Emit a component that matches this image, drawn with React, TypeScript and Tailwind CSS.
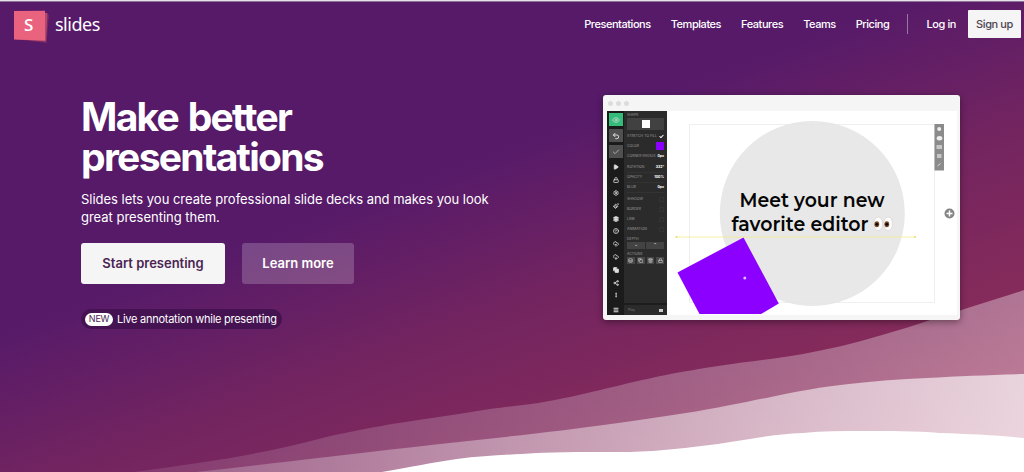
import React from "react";
import {
  Check,
  CircleHelp,
  CloudDownload,
  CloudUpload,
  Copy,
  Eye,
  Layers,
  Lock,
  Menu,
  MoreVertical,
  Paintbrush,
  Play,
  Settings,
  Share2,
  Trash2,
  Undo2,
} from "lucide-react";

const navLinks = ["Presentations", "Templates", "Features", "Teams", "Pricing"];

const railIcons = [
  { Icon: Play, solid: true },
  { Icon: Lock, solid: false },
  { Icon: Settings, solid: false },
  { Icon: Paintbrush, solid: false },
  { Icon: Layers, solid: true },
  { Icon: CircleHelp, solid: false },
  { Icon: CloudUpload, solid: false },
  { Icon: CloudDownload, solid: false },
  { Icon: Copy, solid: true },
  { Icon: Share2, solid: false },
  { Icon: MoreVertical, solid: true },
];

const values = [
  { label: "ROTATION", value: "332°" },
  { label: "OPACITY", value: "100%" },
  { label: "BLUR", value: "0px" },
];

const toggles = ["SHADOW", "BORDER", "LINK", "ANIMATION"];

const Logo: React.FC = () => (
  <a className="flex items-center">
    <svg width="37" height="34" viewBox="0 0 37 34">
      <path d="M3 1 36 4.500 33.500 33 1 29Z" fill="#7d2862" />
      <path d="M2 1 34.500 3 33 31.500 1 29Z" fill="#b04870" />
      <path d="M1 1 32 .8 32 30.500 1 29.500Z" fill="#e9637f" />
      <text x="15.800" y="21" textAnchor="middle" fill="#fff" fontSize="17" fontWeight="600" fontFamily="Open Sans, sans-serif">
        S
      </text>
    </svg>
    <span className="-mt-[7px] ml-[5px] font-['Noto_Sans','Open_Sans',sans-serif] text-[18px] leading-6 tracking-[-0.500px] text-white">
      slides
    </span>
  </a>
);

const Header: React.FC = () => (
  <header className="flex h-[38px] items-start justify-between pl-[13px] pr-[3px] pt-[8px]">
    <Logo />
    <nav className="flex h-[28px] items-center text-[11px] font-medium tracking-[-0.400px] text-white">
      <div className="flex gap-5 tracking-[-0.450px]">
        {navLinks.map((link) => (
          <a key={link}>{link}</a>
        ))}
      </div>
      <span className="ml-[18px] h-5 w-px bg-white/40" />
      <a className="ml-[18px]">Log in</a>
      <a className="ml-[12px] flex h-[28px] w-[53px] items-center justify-center rounded-[1px] bg-[#f5f5f5] text-[#4c4450]">Sign up</a>
    </nav>
  </header>
);

const Rail: React.FC = () => (
  <div className="flex h-full w-[17px] flex-col items-center bg-[#1b1b1b] pt-[2px] text-[#ddd]">
    <div className="flex h-[13px] w-[14px] items-center justify-center bg-[#35bb7a]">
      <Eye size={8} />
    </div>
    <div className="mt-[3px] flex h-[13px] w-[14px] items-center justify-center bg-[#505050]">
      <Undo2 size={8} strokeWidth={3} />
    </div>
    <div className="mt-[3px] flex h-[13px] w-[14px] items-center justify-center bg-[#505050] text-[#aaa]">
      <Check size={8} strokeWidth={3} />
    </div>
    <div className="mt-[3px] flex flex-col">
      {railIcons.map(({ Icon, solid }, i) => (
        <span key={i} className="flex h-[12.800px] items-center">
          <Icon size={6} strokeWidth={3} fill={solid ? "currentColor" : "none"} />
        </span>
      ))}
    </div>
    <Menu size={6} strokeWidth={4} className="mb-[2px] mt-auto" />
  </div>
);

const Properties: React.FC = () => (
  <div className="flex h-full w-[43px] flex-col bg-[#2b2b2b] px-[3px] pt-[2px] text-[3.500px] leading-[5px] text-[#999]">
    <span>SHAPE</span>
    <div className="flex h-[12px] items-center justify-center bg-[#414141]">
      <span className="h-2 w-2 bg-white" />
    </div>
    <div className="mt-[1px] flex h-[10px] items-center justify-between">
      STRETCH TO FILL <Check size={5} strokeWidth={5} className="text-white" />
    </div>
    <div className="flex h-[10px] items-center justify-between">
      COLOR <span className="h-2 w-2 bg-[#8b00ff]" />
    </div>
    <div className="flex h-[10px] items-center justify-between">
      CORNER RADIUS <b className="text-white">0px</b>
    </div>
    <div className="mt-[2px]">
      {values.map(({ label, value }) => (
        <div key={label} className="flex h-[10px] items-center justify-between border-b border-[#333]">
          {label} <b className="text-white">{value}</b>
        </div>
      ))}
    </div>
    <div className="mt-[2px]">
      {toggles.map((label) => (
        <div key={label} className="flex h-[9.800px] items-center justify-between">
          {label} <span className="h-[5px] w-[5px] border border-[#333]" />
        </div>
      ))}
    </div>
    <span className="mt-[3px]">DEPTH</span>
    <div className="flex gap-px text-white">
      <span className="flex h-[7px] flex-1 items-center justify-center bg-[#434343]">⌄</span>
      <span className="flex h-[7px] flex-1 items-center justify-center bg-[#434343]">⌃</span>
    </div>
    <span className="mt-[3px]">ACTIONS</span>
    <div className="flex gap-[2px] text-[#ccc]">
      {[Layers, Copy, Trash2, Lock].map((Icon, i) => (
        <span key={i} className="flex h-[7px] flex-1 items-center justify-center bg-[#484848]">
          <Icon size={5} strokeWidth={3} />
        </span>
      ))}
    </div>
    <div className="-mx-[3px] mt-auto flex h-[12px] items-center justify-between border-t-2 border-[#1d1d1d] px-[4px]">
      <span className="text-[#777]">Play</span>
      <span className="h-[3px] w-[4px] bg-[#ccc]" />
    </div>
  </div>
);

const SlideCanvas: React.FC = () => (
  <svg className="h-[204px] w-[290px] bg-white" viewBox="667 111 290 204">
    <circle cx="812.300" cy="213.500" r="92.500" fill="#e8e8e8" />
    <path d="M689.500 124.500H934.500V302.500H689.500Z" fill="none" stroke="#e4e4e4" strokeWidth=".6" />
    <g fill="#050505" fontFamily="Montserrat, Inter, sans-serif" fontSize="20" fontWeight="600">
      <text x="739.500" y="206.500" textLength="145" lengthAdjust="spacingAndGlyphs">Meet your new</text>
      <text x="731.500" y="231" textLength="137" lengthAdjust="spacingAndGlyphs">favorite editor</text>
    </g>
    {[878.200, 888.200].map((cx) => (
      <g key={cx}>
        <ellipse cx={cx} cy="223.800" rx="4.400" ry="6.800" fill="#fcfcfc" stroke="#d3cfcb" strokeWidth=".6" />
        <ellipse cx={cx - 1.400} cy="224.300" rx="2.400" ry="3" fill="#7a4a2a" />
        <circle cx={cx - 1.400} cy="224.300" r="1.400" fill="#0b0604" />
      </g>
    ))}
    <path d="M743.500 237.500 778.800 303.500 761 314H699.500L677.500 272.500Z" fill="#8b00ff" />
    <path d="M676 237H915" stroke="#f1ea8f" strokeWidth=".8" />
    <circle cx="676.500" cy="237" r="1" fill="#e9dc62" />
    <circle cx="915" cy="237" r="1" fill="#e9dc62" />
    <circle cx="744.800" cy="278" r="1.500" fill="#e0b8f5" />
    <path d="M934.500 124H944V170.500H934.500Z" fill="#8b8b8b" />
    <g fill="#eee">
      <circle cx="939.200" cy="129" r="2" />
      <ellipse cx="939.500" cy="138.200" rx="2.800" ry="2.200" />
      <path d="M936.500 145H942V149H936.500ZM937 154H941.500V158H937Z" opacity=".6" />
      <path d="M937.500 166 940.500 163.500" stroke="#ddd" />
    </g>
    <circle cx="949.500" cy="213.500" r="5" fill="#858585" />
    <path d="M946.500 213.500H952.500M949.500 210.500V216.500" stroke="#fff" strokeWidth="1.500" />
  </svg>
);

const EditorWindow: React.FC = () => (
  <div className="h-[225px] w-[357px] rounded-[3px] bg-[#f5f5f5] shadow-[0_2px_7px_rgba(0,0,0,0.4)]">
    <div className="flex h-4 items-center gap-[3px] pl-[5px]">
      {[0, 1, 2].map((dot) => (
        <span key={dot} className="h-[5px] w-[5px] rounded-full bg-[#dcdcdc]" />
      ))}
    </div>
    <div className="ml-[4px] flex h-[204px]">
      <Rail />
      <Properties />
      <SlideCanvas />
    </div>
  </div>
);

const Waves: React.FC = () => (
  <svg className="absolute left-0 top-0" width="1024" height="472" viewBox="0 0 1024 472">
    <defs>
      <linearGradient id="wave" x1="130" x2="1024" y1="0" y2="0" gradientUnits="userSpaceOnUse">
        <stop offset="0" stopColor="#fff" stopOpacity=".1" />
        <stop offset="1" stopColor="#fff" stopOpacity=".35" />
      </linearGradient>
      <linearGradient id="waveFront" x1="196" x2="1024" y1="0" y2="0" gradientUnits="userSpaceOnUse">
        <stop offset="0" stopColor="#fff" stopOpacity=".2" />
        <stop offset="1" stopColor="#fff" stopOpacity=".67" />
      </linearGradient>
    </defs>
    <path d="M134 472C200 463 250 456 307 442C340 433 360 430 392 424C430 418 455 415 490 409C520 405 535 404 555 400C600 391 630 382 666 375C685 371 700 369 718 366C750 361 775 359 803 354C830 349 855 343 875 337C900 330 915 325 940 317C970 307 995 300 1024 290V472Z" fill="url(#wave)" />
    <path d="M196 472C240 467 285 462 327 457C385 450 440 444 496 438C530 434 560 431 588 427C625 422 655 418 686 413C720 408 745 402 771 397C800 391 820 387 849 384C875 381 900 379 927 378C960 376 990 375 1024 374V472Z" fill="url(#waveFront)" />
    <path d="M382 472C410 467 430 463 457 459C480 456 500 455 522 454C550 452 580 452 607 452C625 452 635 452 653 451C675 449 695 447 718 444C750 439 775 434 803 433C823 431 842 431 862 431C890 431 915 431 940 433C970 434 995 435 1024 438V472Z" fill="#fff" />
  </svg>
);

const App: React.FC = () => (
  <div className="relative h-[472px] w-[1024px] overflow-hidden bg-[linear-gradient(160deg,#561a69_0%,#561a69_39%,#722460_58%,#852b5b_78%,#a83a60_100%)] font-['Inter',sans-serif]">
    <Waves />
    <div className="relative">
      <div className="h-[2px] border-b border-[#8f739a] bg-[#e6e2e8]" />
      <Header />
      <main className="flex items-start justify-between pl-[81px] pr-[64px] pt-[55px]">
        <section className="w-[420px] whitespace-nowrap pt-[2px] text-white">
          <h1 className="text-[39px] font-bold leading-[40px] tracking-[-1.700px] [word-spacing:2px]">
            Make better
            <br />
            presentations
          </h1>
          <p className="mt-[13px] text-[13px] leading-[18px] tracking-[-0.020px]">
            Slides lets you create professional slide decks and makes you look
            <br />
            great presenting them.
          </p>
          <div className="mt-[17px] flex gap-[17px] text-[13px] font-semibold">
            <a className="flex h-[41px] w-[144px] items-center justify-center rounded-[3px] bg-[#f5f5f5] text-[#4b2453]">Start presenting</a>
            <a className="flex h-[41px] w-[112px] items-center justify-center rounded-[3px] bg-white/20">Learn more</a>
          </div>
          <a className="mt-[25px] inline-flex h-5 items-center rounded-full bg-[#451252] pl-[4px] pr-[5px] text-[11px] tracking-[-0.260px]">
            <span className="mr-[4px] flex h-[13px] w-[28px] items-center justify-center rounded-full bg-white text-[9px] text-[#4b2453]">NEW</span>
            Live annotation while presenting
          </a>
        </section>
        <EditorWindow />
      </main>
    </div>
  </div>
);

export default App;
